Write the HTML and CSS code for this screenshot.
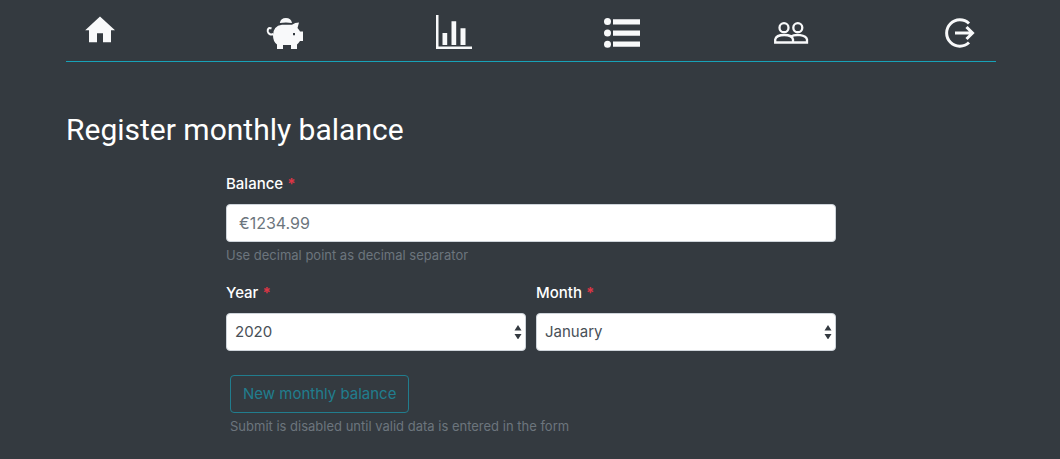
FILE: index.html
```html
<!DOCTYPE html>
<html lang="en">
<head>
<meta charset="utf-8">
<title>Register monthly balance</title>
<link rel="stylesheet" href="styles.css">
</head>
<body>
<div class="container">
  <nav class="navbar" aria-label="Main">
    <a class="nav-link home" href="#home" aria-label="Home">
      <svg class="icon" viewBox="0 0 36 36"><path d="M18-.5 33 13.200H29V25.200H21V16.200H15V25.200H7V13.200H3.200Z"/></svg>
    </a>
    <a class="nav-link" href="#savings" aria-label="Savings">
      <svg class="icon" viewBox="0 0 36 36"><path d="M12.800 6A6.200 6.200 0 0 1 25 6Q19 5.200 12.800 6Z"/><path fill-rule="evenodd" d="M15 7.800H25Q28 5.500 32 5.500L30.500 11Q32.500 13 33 14.500H36V24H33Q31.500 26 30 27.500V32H24V28H16V32H10V27.500Q6 24.500 6 18.500Q6 9 15 7.800ZM26 16V18.200H28V16Z"/><path class="stroke" d="M4.500 11.500C1 10 .5 13 .8 14.500C1.500 17.500 4 18 6.500 17"/></svg>
    </a>
    <a class="nav-link" href="#statistics" aria-label="Statistics">
      <svg class="icon" viewBox="0 0 36 36"><path d="M0-2H2.500V29.500H36V32H0ZM6.500 16H11.200V28H6.500ZM15.500 4.200H20.200V28H15.500ZM24.500 11.200H29.500V28H24.500Z"/></svg>
    </a>
    <a class="nav-link" href="#list" aria-label="List">
      <svg class="icon" viewBox="0 0 36 36"><circle cx="3.500" cy="4.500" r="3.500"/><circle cx="3.500" cy="16" r="3.500"/><circle cx="3.500" cy="27.200" r="3.500"/><path d="M9 2.300H36V7.500H9ZM9 13.400H36V18.700H9ZM9 24.500H36V29.800H9Z"/></svg>
    </a>
    <a class="nav-link" href="#people" aria-label="People">
      <svg class="icon" viewBox="0 0 36 36"><g class="stroke people"><circle cx="11" cy="10.700" r="4.500"/><circle cx="24.800" cy="10.700" r="4.500"/><path d="M2.200 25.500V22.500C3.500 16.500 19 16.500 20 22.500V25.500ZM20 25.500H34V22.500C33 17.500 22 17 18 19.500"/></g></svg>
    </a>
    <a class="nav-link" href="#logout" aria-label="Log out">
      <svg class="icon" viewBox="0 0 36 36"><path class="stroke exit" d="M27 6.500A13.200 13.200 0 1 0 27 25.500M13 16H30M24.500 10 30.500 16 24.500 22"/></svg>
    </a>
  </nav>
  <main>
    <h1 class="title">Register monthly balance</h1>
    <form class="form">
      <div class="group">
        <label class="label" for="balance">Balance <span class="required">*</span></label>
        <input class="control amount" id="balance" type="text" placeholder="€1234.99" aria-describedby="balance-help">
        <small class="help" id="balance-help">Use decimal point as decimal separator</small>
      </div>
      <div class="row">
        <div class="group">
          <label class="label" for="year">Year <span class="required">*</span></label>
          <div class="picker">
            <select class="control select" id="year"><option>2020</option></select>
            <svg class="arrows" viewBox="0 0 8 14"><path d="M.5 5.500 4 0 7.500 5.500ZM.5 9 4 14.500 7.500 9Z"/></svg>
          </div>
        </div>
        <div class="group">
          <label class="label" for="month">Month <span class="required">*</span></label>
          <div class="picker">
            <select class="control select" id="month"><option>January</option></select>
            <svg class="arrows" viewBox="0 0 8 14"><path d="M.5 5.500 4 0 7.500 5.500ZM.5 9 4 14.500 7.500 9Z"/></svg>
          </div>
        </div>
      </div>
      <div class="actions">
        <button class="submit" type="submit" disabled>New monthly balance</button>
        <small class="help">Submit is disabled until valid data is entered in the form</small>
      </div>
    </form>
  </main>
</div>
</body>
</html>
```
FILE: styles.css
```css
* { box-sizing: border-box; }
body {
  margin: 0;
  background: #343a40;
  color: #fff;
  font: 15px/24px Inter, "Liberation Sans", sans-serif;
}
.container { max-width: 960px; margin: 0 auto; padding: 0 14px 20px 16px; }
.navbar {
  display: flex;
  justify-content: space-between;
  padding: 17px 18px 8px 16px;
  border-bottom: 1px solid #17a2b8;
}
.nav-link { display: block; height: 36px; color: #f8f9fa; }
.home { margin-right: 16px; }
.icon { display: block; width: 36px; height: 36px; fill: currentColor; overflow: visible; }
.stroke { fill: none; stroke: currentColor; stroke-width: 2; }
.people { stroke-width: 2.3; }
.exit { stroke-width: 3; }
.title {
  margin: 48px 0 22px;
  font: 400 30px/40px Roboto, "Liberation Sans", sans-serif;
}
.form { max-width: 610px; margin: 0 auto; }
.group { display: flex; flex-direction: column; flex: 1; margin-bottom: 16px; }
.label { margin-bottom: 8px; font-weight: 500; }
.required { color: #dc3545; font-weight: 700; }
.control {
  width: 100%;
  height: 38px;
  padding: 6px 12px;
  border: 1px solid #ced4da;
  border-radius: 4px;
  background: #fff;
  color: #495057;
  font: inherit;
}
.amount { font-size: 16px; }
.control::placeholder { color: #6c757d; opacity: 1; }
.help { display: block; margin-top: 3px; color: #6c757d; font-size: 13px; line-height: 20px; }
.row { display: flex; gap: 10px; }
.picker { position: relative; }
.select { appearance: none; padding: 6px 8px; }
.arrows {
  position: absolute;
  top: 12px;
  right: 4px;
  width: 8px;
  height: 14px;
  fill: #343a40;
  pointer-events: none;
}
.actions { padding: 8px 4px 0; }
.submit {
  padding: 6px 12px;
  border: 1px solid #17a2b8;
  border-radius: 4px;
  background: transparent;
  color: #17a2b8;
  font: inherit;
  opacity: .65;
}
```
